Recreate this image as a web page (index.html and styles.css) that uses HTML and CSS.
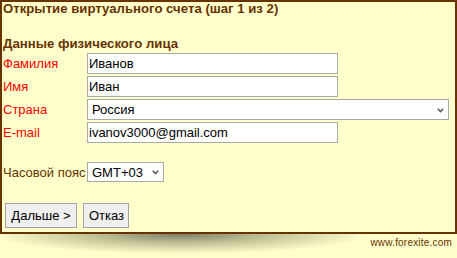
FILE: index.html
```html
<!DOCTYPE html>
<html lang="ru">
<head>
<meta charset="utf-8">
<title>Открытие виртуального счета</title>
<link rel="stylesheet" href="styles.css">
</head>
<body>
<div class="box">
  <h1 class="title">Открытие виртуального счета (шаг 1 из 2)</h1>
  <h2 class="section">Данные физического лица</h2>
  <div class="grid">
    <label class="lbl req">Фамилия</label>
    <input class="field" type="text" value="Иванов">
    <label class="lbl req">Имя</label>
    <input class="field" type="text" value="Иван">
    <label class="lbl req">Страна</label>
    <div class="select-wrap wide">
      <select class="sel"><option>Россия</option></select>
      <svg class="chev" width="7" height="5" viewBox="0 0 7 5"><path d="M0.8 0.8 L3.5 3.6 L6.2 0.8" fill="none" stroke="#555" stroke-width="1.5"/></svg>
    </div>
    <label class="lbl req">E-mail</label>
    <input class="field" type="text" value="ivanov3000@gmail.com">
  </div>
  <div class="grid tz">
    <label class="lbl">Часовой пояс</label>
    <div class="select-wrap small">
      <select class="sel"><option>GMT+03</option></select>
      <svg class="chev" width="7" height="5" viewBox="0 0 7 5"><path d="M0.8 0.8 L3.5 3.6 L6.2 0.8" fill="none" stroke="#555" stroke-width="1.5"/></svg>
    </div>
  </div>
  <div class="buttons">
    <button class="btn next">Дальше &gt;</button>
    <button class="btn cancel">Отказ</button>
  </div>
</div>
<div class="footer">
  <span class="site">www.forexite.com</span>
</div>
</body>
</html>
```
FILE: styles.css
```css
html, body {
  margin: 0;
  padding: 0;
  background: #ffffcc;
  font-family: "Liberation Sans", Arial, sans-serif;
  font-size: 13px;
}
.box {
  border: 2px solid #663300;
  padding: 0 1px 4px 1px;
  background: #ffffcc;
}
.title {
  margin: 0;
  font-size: 13.2px;
  line-height: 14px;
  font-weight: bold;
  color: #663300;
}
.section {
  margin: 21px 0 0 0;
  font-size: 13.2px;
  line-height: 14px;
  font-weight: bold;
  color: #663300;
}
.grid {
  display: grid;
  grid-template-columns: 84px auto;
  grid-auto-rows: 21px;
  row-gap: 2px;
  align-items: center;
  justify-items: start;
  margin-top: 2px;
}
.grid.tz {
  margin-top: 19px;
  grid-auto-rows: 20px;
}
.lbl {
  color: #663300;
  white-space: nowrap;
}
.lbl.req {
  color: #ff0000;
}
.field {
  box-sizing: border-box;
  width: 251px;
  height: 21px;
  border: 1px solid #a9a9a9;
  padding: 0 1px;
  margin: 0;
  font-family: "Liberation Sans", Arial, sans-serif;
  font-size: 13px;
  color: #000;
  background: #fff;
  outline: none;
}
.select-wrap {
  position: relative;
  height: 100%;
}
.select-wrap.wide { width: 362px; }
.select-wrap.small { width: 77px; }
.sel {
  -webkit-appearance: none;
  appearance: none;
  box-sizing: border-box;
  width: 100%;
  height: 100%;
  margin: 0;
  border: 1px solid #a9a9a9;
  border-radius: 0;
  padding: 0 0 0 4px;
  background: #fff;
  font-family: "Liberation Sans", Arial, sans-serif;
  font-size: 13px;
  color: #000;
}
.chev {
  position: absolute;
  right: 5px;
  top: 50%;
  margin-top: -2px;
}
.buttons {
  display: flex;
  gap: 6px;
  margin-top: 21px;
  padding-left: 2px;
}
.btn {
  box-sizing: border-box;
  height: 25px;
  margin: 0;
  padding: 0 5px;
  border: 1px solid #a3a3a3;
  border-radius: 0;
  background: #efefef;
  font-family: "Liberation Sans", Arial, sans-serif;
  font-size: 13px;
  color: #000;
}
.btn.next { width: 72px; }
.btn.cancel { width: 46px; }
.footer {
  height: 24px;
  display: flex;
  justify-content: flex-end;
  align-items: flex-start;
  padding-right: 5px;
  background:
    radial-gradient(ellipse 190px 20px at 180px 0px, rgba(110, 110, 90, 0.9) 0%, rgba(140, 140, 105, 0.55) 45%, rgba(255, 255, 204, 0) 100%);
}
.site {
  margin-top: 3px;
  font-size: 10px;
  letter-spacing: 0.2px;
  color: #663300;
}
```
